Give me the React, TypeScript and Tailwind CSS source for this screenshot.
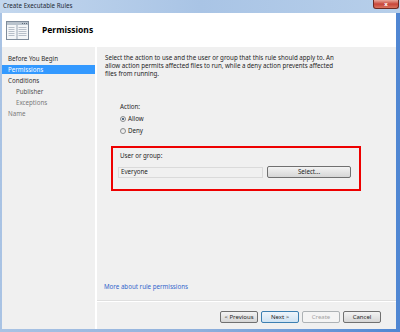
import React from "react";

const navItems = [
  { label: "Before You Begin", indent: false, tone: "text-[#2b2b2b]" },
  { label: "Permissions", indent: false, tone: "text-white", active: true },
  { label: "Conditions", indent: false, tone: "text-[#333333]" },
  { label: "Publisher", indent: true, tone: "text-[#555555]" },
  { label: "Exceptions", indent: true, tone: "text-[#7a7a7a]" },
  { label: "Name", indent: false, tone: "text-[#7a7a7a]" },
];

const WizardIcon = () => (
  <svg width="23" height="19" viewBox="0 0 23 19">
    <rect x="0.5" y="0.5" width="22" height="18" fill="#f4f6f8" stroke="#7f8c9b" />
    <rect x="1" y="1" width="21" height="3" fill="#b9c3cd" />
    <rect x="16" y="2" width="1" height="1" fill="#5d6a78" />
    <rect x="18" y="2" width="1" height="1" fill="#5d6a78" />
    <rect x="20" y="2" width="1" height="1" fill="#5d6a78" />
    <rect x="10.5" y="4" width="1" height="14" fill="#9aa6b3" />
    {[6, 8, 10, 12, 14].map((y) => (
      <rect key={"l" + y} x="2.5" y={y} width="6" height="0.8" fill="#a8b2bd" />
    ))}
    {[6, 8, 10, 12, 14].map((y) => (
      <rect key={"r" + y} x="12.5" y={y} width="8" height="0.8" fill="#a8b2bd" />
    ))}
  </svg>
);

const Radio = ({ checked }: { checked?: boolean }) => (
  <span className="w-[6px] h-[6px] rounded-full border border-[#8a8c8e] bg-gradient-to-b from-[#e2e2e2] to-[#f8f8f8] flex items-center justify-center">
    {checked && <span className="w-[2px] h-[2px] rounded-full bg-[#1d3f66]" />}
  </span>
);

const WinButton = ({
  label,
  variant = "normal",
}: {
  label: string;
  variant?: "normal" | "default" | "disabled";
}) => {
  const styles =
    variant === "default"
      ? "border-[#3c7fb1] bg-gradient-to-b from-[#eef5fb] to-[#cfe3f3] text-[#1e1e1e]"
      : variant === "disabled"
      ? "border-[#adb2b5] bg-[#f4f4f4] text-[#a3a3a3]"
      : "border-[#707070] bg-gradient-to-b from-[#f3f3f3] to-[#d6d6d6] text-[#1e1e1e]";
  return (
    <div
      className={`w-[38px] h-[12px] rounded-[2px] border flex items-center justify-center text-[6px] leading-[8px] ${styles}`}
    >
      {label}
    </div>
  );
};

export default function App() {
  return (
    <div className="w-[400px] h-[332px] flex flex-col overflow-hidden bg-gradient-to-r from-[#a9c3e4] via-[#8fb0dc] to-[#4f86d2] font-['Noto_Sans',sans-serif] text-[#1e1e1e]">
      {/* title bar */}
      <div className="h-[13px] flex items-start bg-gradient-to-r from-[#c3d7ee] via-[#a9c4e5] to-[#b7cfea]">
        <span className="pl-[3px] pt-[2px] text-[6.2px] leading-[8px] text-[#1f2a36]">
          Create Executable Rules
        </span>
        <div className="ml-auto mr-[1px] w-[26px] h-[9px] rounded-b-[3px] border border-t-0 border-[#6e2a22] bg-gradient-to-b from-[#e6a79c] via-[#c8453a] to-[#d9725e] flex items-center justify-center text-white text-[6px] font-bold leading-none">
          x
        </div>
      </div>

      {/* window body */}
      <div className="flex-1 flex flex-col ml-[2px] mr-[4px] mb-[3px] bg-[#f0f0f0]">
        {/* header */}
        <div className="h-[34px] bg-white flex items-center pl-[4px]">
          <WizardIcon />
          <span className="ml-[13px] text-[8.5px] font-bold text-black">Permissions</span>
        </div>

        <div className="flex-1 flex">
          {/* nav */}
          <div className="w-[93px] pt-[6px] flex flex-col text-[6.2px] leading-[8px]">
            {navItems.map((item) => (
              <div key={item.label} className="h-[11px] flex items-center">
                <div
                  className={`w-full h-[9px] flex items-center ${item.indent ? "pl-[14px]" : "pl-[6px]"} ${item.tone} ${item.active ? "bg-[#3399ff]" : ""}`}
                >
                  {item.label}
                </div>
              </div>
            ))}
          </div>

          <div className="w-[2px] bg-white" />

          {/* content */}
          <div className="flex-1 flex flex-col text-[6.2px] leading-[8px]">
            <p className="pl-[8px] pt-[7px] whitespace-nowrap">
              Select the action to use and the user or group that this rule should apply to. An
              <br />
              allow action permits affected files to run, while a deny action prevents affected
              <br />
              files from running.
            </p>

            <div className="pl-[23px] mt-[25px] flex flex-col">
              <span>Action:</span>
              <div className="mt-[4px] flex items-center gap-[2px]">
                <Radio checked />
                <span>Allow</span>
              </div>
              <div className="mt-[4px] flex items-center gap-[2px]">
                <Radio />
                <span>Deny</span>
              </div>
            </div>

            <div className="ml-[14px] mt-[11px] w-[250px] h-[45px] border-2 border-[#ee0000] pl-[5px] pt-[4px] flex flex-col">
              <span className="pl-[2px]">User or group:</span>
              <div className="mt-[6px] flex items-center gap-[4px]">
                <div className="w-[145px] h-[11px] border border-[#dadada] bg-[#f0f0f0] pl-[2px] flex items-center">
                  Everyone
                </div>
                <div className="w-[84px] h-[12px] rounded-[2px] border border-[#707070] bg-gradient-to-b from-[#f3f3f3] to-[#d6d6d6] flex items-center justify-center">
                  Select...
                </div>
              </div>
            </div>

            <a className="mt-auto pl-[7px] text-[#3366cc]">More about rule permissions</a>

            <div className="mt-[9px] h-[1px] bg-white border-t border-[#dfdfdf] box-content" />

            <div className="pt-[9px] pb-[6px] pr-[15px] flex justify-end gap-[3px]">
              <WinButton label="< Previous" />
              <WinButton label="Next >" variant="default" />
              <WinButton label="Create" variant="disabled" />
              <WinButton label="Cancel" />
            </div>
          </div>
        </div>
      </div>
    </div>
  );
}
